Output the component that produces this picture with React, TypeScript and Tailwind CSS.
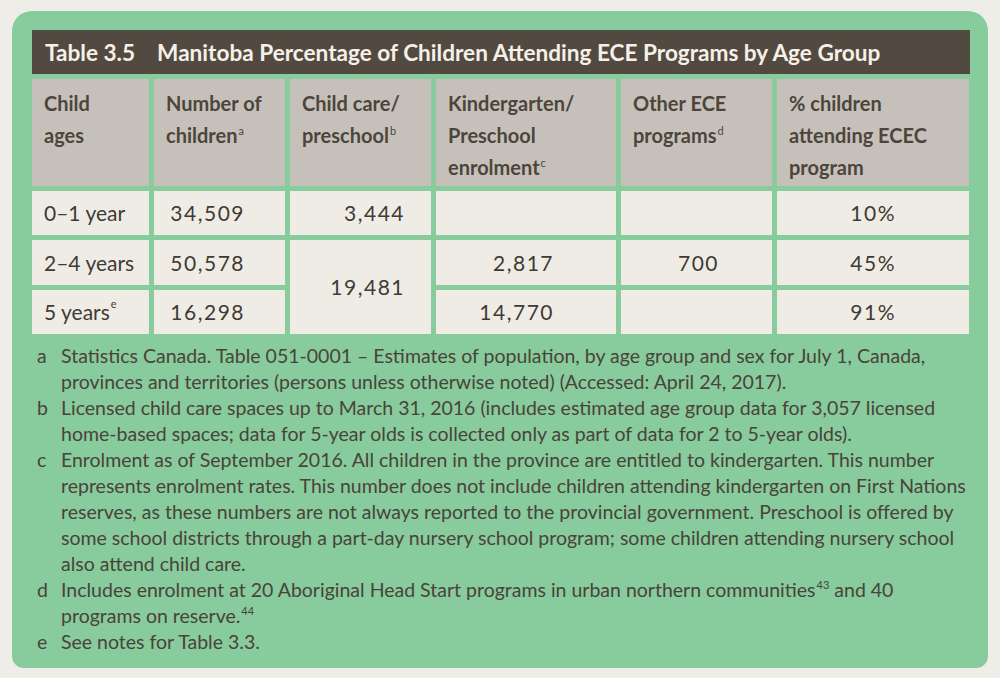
import React from "react";

const font = { fontFamily: "Lato, 'Liberation Sans', sans-serif" };

function Sup({ children }: { children: React.ReactNode }) {
  return <sup className="text-[11px] font-normal leading-none relative -top-[0.75em] ml-[1px]">{children}</sup>;
}

const headers: React.ReactNode[] = [
  <>Child<br />ages</>,
  <>Number of<br />children<Sup>a</Sup></>,
  <>Child care/<br />preschool<Sup>b</Sup></>,
  <>Kindergarten/<br />Preschool<br />enrolment<Sup>c</Sup></>,
  <>Other ECE<br />programs<Sup>d</Sup></>,
  <>% children<br />attending ECEC<br />program</>,
];

const notes: { key: string; text: React.ReactNode }[] = [
  {
    key: "a",
    text: "Statistics Canada. Table 051-0001 – Estimates of population, by age group and sex for July 1, Canada, provinces and territories (persons unless otherwise noted) (Accessed: April 24, 2017).",
  },
  {
    key: "b",
    text: "Licensed child care spaces up to March 31, 2016 (includes estimated age group data for 3,057 licensed home-based spaces; data for 5-year olds is collected only as part of data for 2 to 5-year olds).",
  },
  {
    key: "c",
    text: "Enrolment as of September 2016. All children in the province are entitled to kindergarten. This number represents enrolment rates. This number does not include children attending kindergarten on First Nations reserves, as these numbers are not always reported to the provincial government. Preschool is offered by some school districts through a part-day nursery school program; some children attending nursery school also attend child care.",
  },
  {
    key: "d",
    text: (
      <>
        Includes enrolment at 20 Aboriginal Head Start programs in urban northern communities<Sup>43</Sup> and 40
        programs on reserve.<Sup>44</Sup>
      </>
    ),
  },
  { key: "e", text: "See notes for Table 3.3." },
];

const cell = "bg-[#efece6] flex items-center text-[21px] text-[#3f3a34]";
const num = "tracking-[1.5px]";

export default function App() {
  return (
    <div className="min-h-screen bg-[#efede8] pt-[11px] pl-[12px]" style={font}>
      <div className="w-[976px] h-[657px] bg-[#88cb9c] rounded-t-[20px] rounded-b-[12px] pt-[19px] pl-[20px] pr-[18px]">
        {/* title bar */}
        <div className="h-[44px] bg-[#524a40] flex items-center pl-[13px] pt-[1px] text-[22.6px] font-bold text-[#f5f1e8]">
          <span>Table 3.5</span>
          <span className="ml-[22px]">Manitoba Percentage of Children Attending ECE Programs by Age Group</span>
        </div>

        <div className="mt-[5px] grid gap-[5px] grid-cols-[117px_131px_141px_180px_151px_192px] grid-rows-[107px_44px_45px_44px]">
          {headers.map((h, i) => (
            <div
              key={i}
              className="bg-[#c5c1ba] pl-[12px] pt-[8px] text-[20px] font-bold leading-[32px] text-[#4d453b]"
            >
              {h}
            </div>
          ))}

          {/* row 1 */}
          <div className={`${cell} pl-[12px]`}>0–1 year</div>
          <div className={`${cell} ${num} justify-end pr-[40px]`}>34,509</div>
          <div className={`${cell} ${num} justify-end pr-[26px]`}>3,444</div>
          <div className={cell}></div>
          <div className={cell}></div>
          <div className={`${cell} ${num} justify-end pr-[73px]`}>10%</div>

          {/* row 2 */}
          <div className={`${cell} pl-[12px]`}>2–4 years</div>
          <div className={`${cell} ${num} justify-end pr-[40px]`}>50,578</div>
          <div className={`${cell} ${num} row-span-2 justify-end pr-[26px]`}>19,481</div>
          <div className={`${cell} ${num} justify-end pr-[62px]`}>2,817</div>
          <div className={`${cell} ${num} justify-end pr-[53px]`}>700</div>
          <div className={`${cell} ${num} justify-end pr-[73px]`}>45%</div>

          {/* row 3 */}
          <div className={`${cell} pl-[12px]`}>
            5 years<Sup>e</Sup>
          </div>
          <div className={`${cell} ${num} justify-end pr-[40px]`}>16,298</div>
          <div className={`${cell} ${num} justify-end pr-[62px]`}>14,770</div>
          <div className={cell}></div>
          <div className={`${cell} ${num} justify-end pr-[73px]`}>91%</div>
        </div>

        {/* footnotes */}
        <div className="mt-[9px] flex flex-col text-[19.5px] leading-[26px] text-[#4a433a]">
          {notes.map((n) => (
            <div key={n.key} className="flex">
              <span className="w-[29px] pl-[5px] shrink-0">{n.key}</span>
              <span className="w-[906px]">{n.text}</span>
            </div>
          ))}
        </div>
      </div>
    </div>
  );
}
